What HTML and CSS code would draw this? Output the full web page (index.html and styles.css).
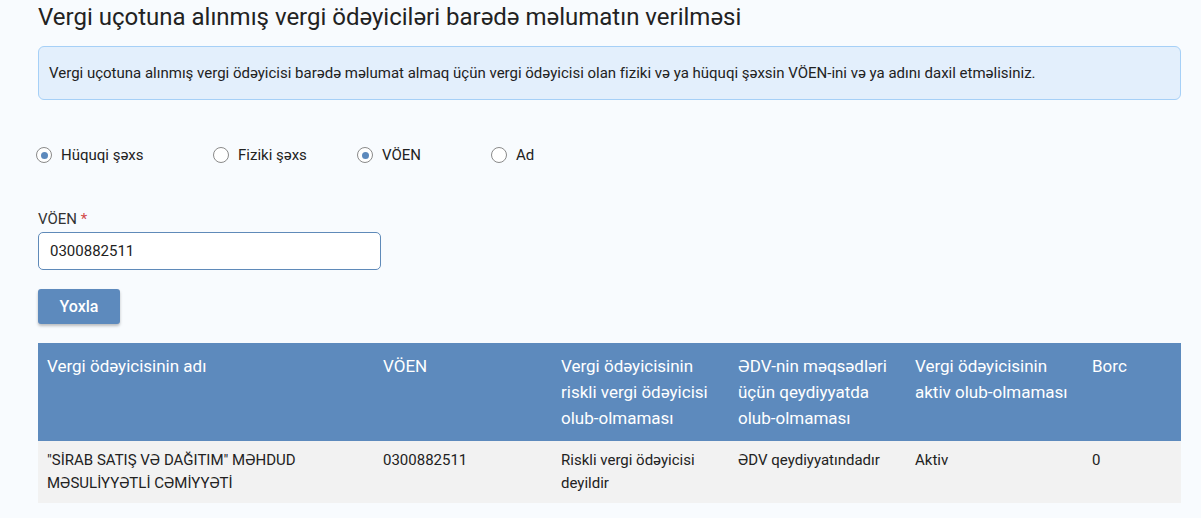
FILE: index.html
```html
<!DOCTYPE html>
<html lang="az">
<head>
    <meta charset="UTF-8">
    <meta name="viewport" content="width=device-width, initial-scale=1.0">
    <title>Vergi ödəyiciləri barədə məlumat</title>
    <link rel="stylesheet" href="styles.css">
</head>
<body>
    <div class="page">
        <h1>Vergi uçotuna alınmış vergi ödəyiciləri barədə məlumatın verilməsi</h1>

        <div class="info-box">
            Vergi uçotuna alınmış vergi ödəyicisi barədə məlumat almaq üçün vergi ödəyicisi olan fiziki və ya hüquqi şəxsin VÖEN-ini və ya adını daxil etməlisiniz.
        </div>

        <div class="radio-row">
            <label class="radio-item"><input type="radio" name="type" checked> Hüquqi şəxs</label>
            <label class="radio-item"><input type="radio" name="type"> Fiziki şəxs</label>
            <label class="radio-item"><input type="radio" name="search" checked> VÖEN</label>
            <label class="radio-item"><input type="radio" name="search"> Ad</label>
        </div>

        <div class="field">
            <label for="voen" class="field-label">VÖEN <span class="required">*</span></label>
            <input type="text" id="voen" value="0300882511">
        </div>

        <button class="check-btn">Yoxla</button>

        <table class="result-table">
            <thead>
                <tr>
                    <th class="col-name">Vergi ödəyicisinin adı</th>
                    <th class="col-voen">VÖEN</th>
                    <th class="col-mid">Vergi ödəyicisinin riskli vergi ödəyicisi olub-olmaması</th>
                    <th class="col-mid">ƏDV-nin məqsədləri üçün qeydiyyatda olub-olmaması</th>
                    <th class="col-mid">Vergi ödəyicisinin aktiv olub-olmaması</th>
                    <th>Borc</th>
                </tr>
            </thead>
            <tbody>
                <tr>
                    <td>"SİRAB SATIŞ VƏ DAĞITIM" MƏHDUD MƏSULİYYƏTLİ CƏMİYYƏTİ</td>
                    <td>0300882511</td>
                    <td>Riskli vergi ödəyicisi deyildir</td>
                    <td>ƏDV qeydiyyatındadır</td>
                    <td>Aktiv</td>
                    <td>0</td>
                </tr>
            </tbody>
        </table>
    </div>
</body>
</html>
```

FILE: styles.css
```css
body {
    margin: 0;
    font-family: Roboto, 'Liberation Sans', sans-serif;
    background-color: #f8fbfe;
    color: #222;
}

.page {
    padding: 0 20px 0 38px;
}

h1 {
    margin: 0;
    padding-top: 3px;
    font-size: 24px;
    font-weight: 400;
    line-height: 28px;
    color: #222;
}

.info-box {
    margin-top: 15px;
    height: 52px;
    display: flex;
    align-items: center;
    padding-left: 10px;
    font-size: 15px;
    background-color: #e3effc;
    border: 1px solid #a6d0f7;
    border-radius: 6px;
}

.radio-row {
    display: grid;
    grid-template-columns: 177px 144px 134px auto;
    margin-top: 45px;
    margin-left: -2px;
}

.radio-item {
    display: flex;
    align-items: center;
    gap: 9px;
    font-size: 15px;
    color: #222;
    height: 20px;
}

.radio-item input {
    appearance: none;
    margin: 0;
    width: 16px;
    height: 16px;
    border: 1px solid #8a8a8a;
    border-radius: 50%;
    background: #fff;
    display: grid;
    place-items: center;
}

.radio-item input:checked::after {
    content: "";
    width: 7px;
    height: 7px;
    border-radius: 50%;
    background-color: #5d8abd;
}

.field {
    margin-top: 45px;
}

.field-label {
    display: block;
    font-size: 15px;
    line-height: 18px;
    color: #333;
    margin-bottom: 4px;
}

.required {
    color: #d24a4a;
}

input[type="text"] {
    display: block;
    box-sizing: border-box;
    width: 343px;
    height: 38px;
    padding: 0 11px;
    font-family: inherit;
    font-size: 15px;
    color: #222;
    background: #fff;
    border: 1px solid #5f8ab9;
    border-radius: 5px;
    outline: none;
}

.check-btn {
    display: block;
    margin-top: 19px;
    width: 82px;
    height: 35px;
    font-family: inherit;
    font-size: 16px;
    font-weight: 500;
    color: #fff;
    background-color: #5d8abd;
    border: none;
    border-radius: 3px;
    box-shadow: 0 2px 3px rgba(0, 0, 0, 0.25);
}

.result-table {
    margin-top: 19px;
    width: 1143px;
    border-collapse: collapse;
    table-layout: fixed;
}

.result-table th {
    background-color: #5d8abd;
    color: #fff;
    font-size: 17px;
    font-weight: 400;
    line-height: 26px;
    text-align: left;
    vertical-align: top;
    padding: 10px 9px;
    height: 78px;
}

.result-table .col-name {
    width: 318px;
}

.result-table .col-voen {
    width: 160px;
}

.result-table .col-mid {
    width: 159px;
}

.result-table td {
    background-color: #f2f2f2;
    font-size: 15px;
    line-height: 23px;
    vertical-align: top;
    padding: 8px 9px;
    color: #222;
}
```
